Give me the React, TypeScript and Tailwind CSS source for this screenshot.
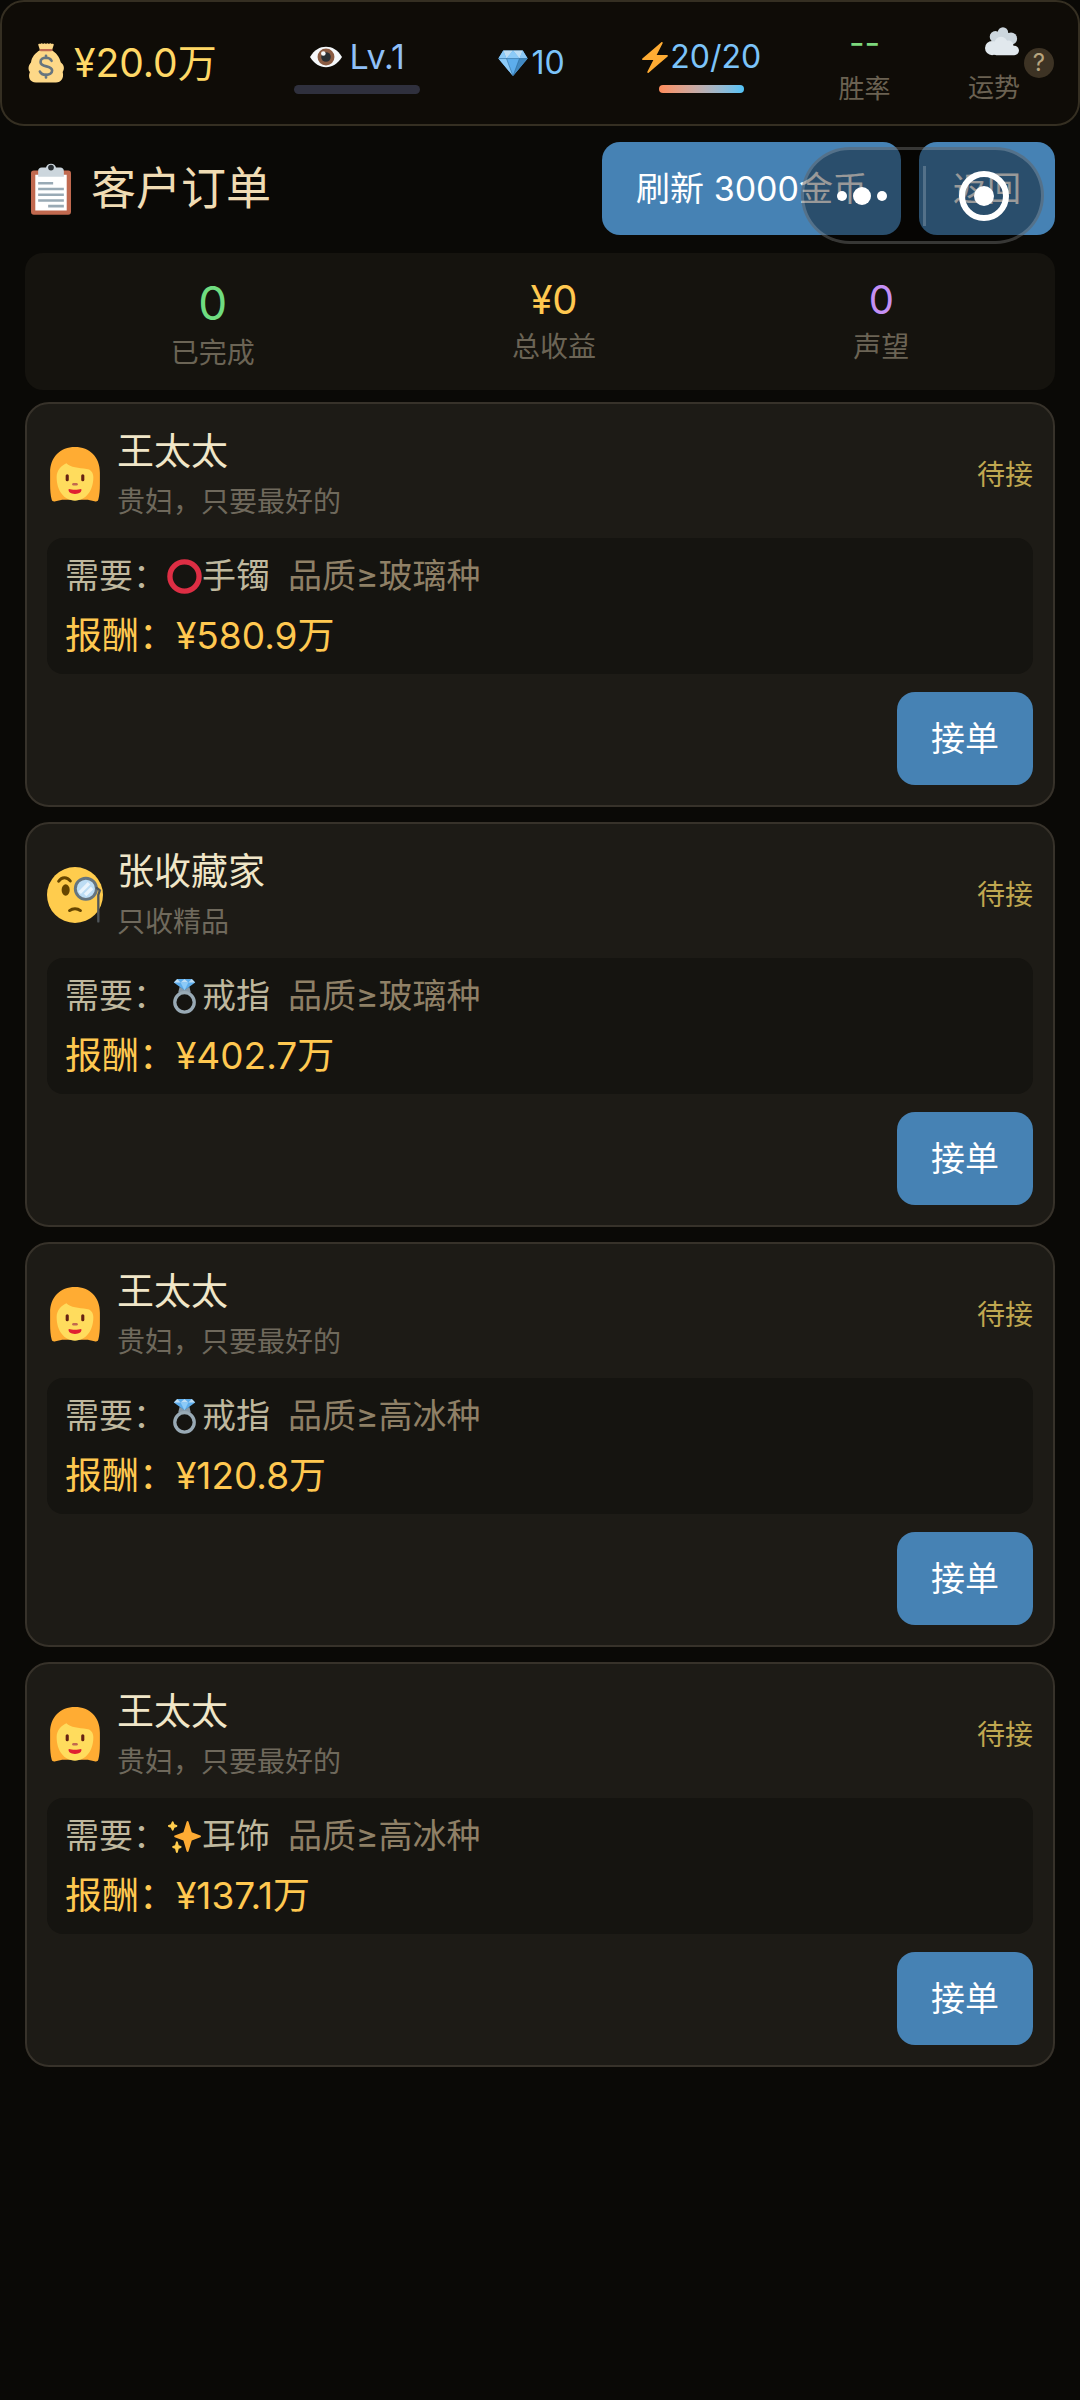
import type { ReactNode } from "react";

interface IconProps {
  className: string;
}

interface Order {
  id: number;
  customer: string;
  desc: string;
  avatar: "lady" | "collector";
  item: "bracelet" | "ring" | "earring";
  itemName: string;
  quality: string;
  reward: string;
}

const orders: Order[] = [
  { id: 1, customer: "王太太", desc: "贵妇，只要最好的", avatar: "lady", item: "bracelet", itemName: "手镯", quality: "玻璃种", reward: "¥580.9万" },
  { id: 2, customer: "张收藏家", desc: "只收精品", avatar: "collector", item: "ring", itemName: "戒指", quality: "玻璃种", reward: "¥402.7万" },
  { id: 3, customer: "王太太", desc: "贵妇，只要最好的", avatar: "lady", item: "ring", itemName: "戒指", quality: "高冰种", reward: "¥120.8万" },
  { id: 4, customer: "王太太", desc: "贵妇，只要最好的", avatar: "lady", item: "earring", itemName: "耳饰", quality: "高冰种", reward: "¥137.1万" },
];

function MoneyBagIcon({ className }: IconProps) {
  return (
    <svg viewBox="0 0 36 36" className={className} aria-hidden="true">
      <path fill="#FDD888" d="M11 1.500c0-1 1-1.200 1.800-.5.700-.9 1.900-.9 2.600-.1.700-.9 1.900-.9 2.600 0 .700-.9 1.900-.9 2.600 0 .700-.8 1.900-.8 2.600.1.800-.7 1.800-.5 1.800.5L23.400 6.500c6 4 7 8 8 11 3 2 3.500 6 1.600 8.500 1.500 5.500-1.500 9.500-6 9.500H9c-5.500 0-7.500-5-5.500-9.500-2.500-3-.5-7 1-8.500.5-4.500 3.500-8.500 8.100-11z" />
      <rect x="12.200" y="5.400" width="11.600" height="2" rx="1" fill="#BF6952" />
      <path fill="none" stroke="#67757F" strokeWidth="2.400" strokeLinecap="round" d="M18 11.500v2M18 28.500v2.500M23 16c-1-2-2.700-2.700-5-2.700-2.900 0-4.900 1.500-4.900 3.700 0 5.500 10.400 2.600 10.400 7.800 0 2.500-2.400 3.900-5.500 3.900-2.700 0-4.700-1-5.500-3" />
    </svg>
  );
}

function EyeIcon({ className }: IconProps) {
  return (
    <svg viewBox="0 0 36 24" className={className} aria-hidden="true">
      <path fill="#F5F8FA" d="M0 12C5 4 11 .5 18 .5S31 4 36 12c-5 8-11 11.500-18 11.500S5 20 0 12z" />
      <circle cx="18" cy="12" r="9.500" fill="#8A5B42" />
      <circle cx="18" cy="12" r="5.400" fill="#292F33" />
      <circle cx="15" cy="8" r="2.600" fill="#F5F8FA" />
    </svg>
  );
}

function GemIcon({ className }: IconProps) {
  return (
    <svg viewBox="0 0 36 32" className={className} aria-hidden="true">
      <path fill="#5DADEC" d="M0 10.500 6 .5h24l6 10L18 32z" />
      <path fill="#BDDDF4" d="M6 .5 10 10.500 18 .5zM30 .5l-4 10L18 .5z" />
      <path fill="#8CCAF7" d="M6 .5 0 10.500h10zM30 .5l6 10H26zM18 .5l-8 10h16z" />
      <path fill="#8CCAF7" d="M0 10.500h10L18 32z" />
      <path fill="#4289C1" d="M36 10.500H26L18 32z" />
      <path fill="none" stroke="#2A6797" strokeWidth=".7" d="M0 10.500h36M10 10.500 18 32l8-21.500" />
    </svg>
  );
}

function BoltIcon({ className }: IconProps) {
  return (
    <svg viewBox="3 0 30 36" className={className} aria-hidden="true">
      <path fill="#FFAC33" d="M32.938 15.651C32.792 15.260 32.418 15 32 15H19.925L26.890 1.458c.219-.426.106-.947-.271-1.243C26.437.071 26.218 0 26 0c-.233 0-.466.082-.653.243L18 6.588 3.347 19.243c-.316.273-.43.714-.284 1.105S3.582 21 4 21h12.075L9.110 34.542c-.219.426-.106.947.271 1.243.182.144.401.215.619.215.233 0 .466-.082.653-.243L18 29.412l14.653-12.655c.317-.273.43-.714.285-1.106z" />
    </svg>
  );
}

function CloudIcon({ className }: IconProps) {
  return (
    <svg viewBox="0 0 36 30" className={className} aria-hidden="true">
      <g fill="#CCD6DD">
        <circle cx="19" cy="5.500" r="5.500" />
        <circle cx="11" cy="10" r="6" />
        <circle cx="27.500" cy="12" r="6.500" />
        <rect x="9" y="6" width="20" height="14" />
      </g>
      <g fill="#E1E8ED">
        <circle cx="7.500" cy="22" r="7.500" />
        <circle cx="17" cy="17" r="7" />
        <circle cx="25" cy="19" r="5" />
        <rect x="7" y="19.500" width="29" height="10" rx="5" />
      </g>
    </svg>
  );
}

function ClipboardIcon({ className }: IconProps) {
  return (
    <svg viewBox="0 0 28 36" className={className} aria-hidden="true">
      <rect y="5" width="28" height="31" rx="2" fill="#C1694F" />
      <path fill="#FFF" d="M3 8h22v25H3z" />
      <path fill="#CCD6DD" d="M5 9.500V5.500C5 4 6 3 7.500 3h3a3.600 3.600 0 0 1 7 0h3C22 3 23 4 23 5.500v4z" />
      <circle cx="14" cy="3" r="2" fill="#292F33" />
      <path stroke="#99AAB5" strokeWidth="1.800" d="M5 14h10.500M5 18h18M5 22h18M5 26h18M12 30h11" />
    </svg>
  );
}

function LadyIcon({ className }: IconProps) {
  return (
    <svg viewBox="0 0 36 36" className={className} aria-hidden="true">
      <path fill="#FFAC33" d="M18 0C8.500 0 2 6.500 2 16.500V24c0 4 .3 7 1 9.800.3 1.200 1.300 1.500 2.500 1.100 2.500-.8 4.500-1.200 6.500-1h12c2-.2 4 .2 6.500 1 1.200.4 2.200.1 2.500-1.100.7-2.800 1-5.800 1-9.800v-7.500C34 6.500 27.500 0 18 0z" />
      <path fill="#FFDC5D" d="M12.500 10.500c2.500 2.800 8 3 13 3.600 2.800.3 4.300 2.400 4.300 5.400 0 8.500-4.800 15-11.800 15S6.200 28 6.200 19.500c0-4.500 3-7.500 6.300-9z" />
      <rect x="12" y="17.500" width="2" height="4.500" rx="1" fill="#662113" />
      <rect x="22" y="17.500" width="2" height="4.500" rx="1" fill="#662113" />
      <path stroke="#C1694F" strokeWidth="1.600" strokeLinecap="round" d="M17 24h2" />
      <path fill="#DF1F32" d="M14 27c2 .7 6 .7 8 0 .7 1.600-1.200 3.200-4 3.200S13.300 28.600 14 27z" />
    </svg>
  );
}

function CollectorIcon({ className }: IconProps) {
  return (
    <svg viewBox="0 0 36 36" className={className} aria-hidden="true">
      <circle cx="18" cy="18" r="18" fill="#FFCC4D" />
      <path fill="none" stroke="#664500" strokeWidth="1.900" strokeLinecap="round" d="M7.500 9.200c2-3.200 5.500-3 7.500-.2M14.500 28c2-1.600 5-1.600 7 0" />
      <ellipse cx="12" cy="14.800" rx="2.600" ry="3.700" fill="#664500" />
      <circle cx="25" cy="14" r="6.800" fill="#BDDDF4" stroke="#66757F" strokeWidth="1.900" />
      <path stroke="#E9F4FC" strokeWidth="2.200" d="m21 16.500 6-6M24.500 18l4.500-4.500" />
      <path fill="none" stroke="#50565A" strokeWidth="1.500" strokeLinecap="round" d="m32 13.500 2 1.500-1 3v17" />
    </svg>
  );
}

function ItemIcon({ item, className }: IconProps & { item: Order["item"] }) {
  if (item === "bracelet") {
    return (
      <svg viewBox="0 0 36 36" className={className} aria-hidden="true">
        <circle cx="18" cy="18" r="15" fill="none" stroke="#DD2E44" strokeWidth="5.500" />
      </svg>
    );
  }
  if (item === "ring") {
    return (
      <svg viewBox="0 0 36 36" className={className} aria-hidden="true">
        <path fill="#8899A6" d="m13 8 5 3 5-3 1.500 6h-13z" />
        <circle cx="18" cy="24" r="10" fill="none" stroke="#99AAB5" strokeWidth="3.400" />
        <path fill="#5DADEC" d="M7 3.500 10.500 0h15L29 3.500 18 11.500z" />
        <path fill="#BDDDF4" d="m7 3.500 3.500-3.500L14 3.500zM18 0l4 3.500h-8zM25.500 0 29 3.500h-7z" />
        <path fill="#8CCAF7" d="M14 3.500h8l-4 8z" />
      </svg>
    );
  }
  return (
    <svg viewBox="0 0 36 36" className={className} aria-hidden="true">
      <path fill="#FFAC33" d="M34.347 16.893l-8.899-3.294-3.323-10.891c-.128-.42-.517-.708-.956-.708-.439 0-.828.288-.956.708l-3.322 10.891-8.900 3.294c-.393.146-.653.519-.653.938 0 .418.260.793.653.938l8.895 3.293 3.324 11.223c.126.424.516.715.959.715.442 0 .833-.291.959-.716l3.324-11.223 8.896-3.293c.391-.144.652-.518.652-.937 0-.418-.261-.792-.653-.938z" />
      <path fill="#FFCC4D" d="M14.347 27.894l-2.314-.856-.9-3.300c-.118-.436-.513-.738-.964-.738-.451 0-.846.302-.965.737l-.9 3.300-2.313.856c-.393.146-.653.520-.653.938 0 .418.260.792.653.938l2.301.853.907 3.622c.112.444.511.756.970.756.459 0 .858-.312.970-.757l.907-3.622 2.301-.853c.393-.144.653-.519.653-.937 0-.418-.260-.793-.653-.937zM10.009 6.231l-2.364-.875-.876-2.365c-.145-.393-.519-.653-.938-.653-.418 0-.792.260-.938.653l-.875 2.365-2.365.875c-.393.146-.653.520-.653.938 0 .418.260.793.653.938l2.365.875.875 2.365c.146.393.520.653.938.653.418 0 .792-.260.938-.653l.875-2.365 2.365-.875c.393-.146.653-.520.653-.938 0-.418-.260-.792-.653-.938z" />
    </svg>
  );
}

function BlueButton({ children }: { children: ReactNode }) {
  return (
    <button type="button" className="h-[93px] shrink-0 rounded-[18px] bg-[#4682b4] px-[34px] text-[34px] leading-[48px] whitespace-nowrap text-white">
      {children}
    </button>
  );
}

// 顶部资源栏
function StatusBar() {
  return (
    <header className="flex h-[126px] items-center justify-between rounded-3xl border-2 border-[#352f22] bg-[#0f0c07] px-6">
      <div className="flex items-center gap-2 text-[39px] leading-[48px] text-[#ffd866]">
        <MoneyBagIcon className="h-10 w-10" />
        ¥20.0万
      </div>
      <div className="flex w-[126px] flex-col items-center gap-1">
        <div className="flex items-center gap-2 text-[34px] leading-[48px] text-[#90c0f8]">
          <EyeIcon className="h-[22px] w-8" />
          Lv.1
        </div>
        <div className="h-[9px] w-full rounded-full bg-[#2f303d]" />
      </div>
      <div className="flex items-center gap-1 text-[32px] leading-[48px] text-[#7cc4fa]">
        <GemIcon className="h-[26px] w-[30px]" />
        10
      </div>
      <div className="flex flex-col items-center gap-1">
        <div className="flex items-center gap-[2px] text-[32px] leading-[48px] text-[#7cc4fa]">
          <BoltIcon className="h-[31px] w-[26px]" />
          20/20
        </div>
        <div className="h-2 w-[85px] rounded-full bg-linear-to-r from-[#ff8c5a] to-[#4fc3f7]" />
      </div>
      <div className="flex flex-col items-center pt-2 text-[26px] leading-[48px] text-[#6b6252]">
        <span className="text-[34px] leading-[44px] text-[#7dd87d]">--</span>
        胜率
      </div>
      <div className="flex items-center gap-1">
        <div className="flex flex-col items-center gap-3 pt-2 text-[26px] leading-[40px] text-[#6b6252]">
          <CloudIcon className="ml-4 h-[29px] w-[34px]" />
          运势
        </div>
        <button type="button" aria-label="运势说明" className="h-[30px] w-[30px] rounded-full bg-[#3d3324] text-[24px] leading-[30px] text-[#b8a57e]">
          ?
        </button>
      </div>
    </header>
  );
}

// 小程序右上角胶囊
function Capsule() {
  return (
    <div className="absolute top-[147px] right-9 flex h-[97px] w-[243px] items-center rounded-full border-[3px] border-white/20 bg-black/40">
      <button type="button" aria-label="更多" className="flex flex-1 items-center justify-center gap-[6px] pr-1">
        <span className="h-[10px] w-[10px] rounded-full bg-white" />
        <span className="h-[18px] w-[18px] rounded-full bg-white" />
        <span className="h-[10px] w-[10px] rounded-full bg-white" />
      </button>
      <span className="h-[60px] w-[3px] bg-white/20" />
      <button type="button" aria-label="关闭" className="flex flex-1 items-center justify-center">
        <span className="flex h-[50px] w-[50px] items-center justify-center rounded-full border-[6px] border-white">
          <span className="h-5 w-5 rounded-full bg-white" />
        </span>
      </button>
    </div>
  );
}

function OrderCard({ order }: { order: Order }) {
  return (
    <article className="rounded-3xl border-2 border-[#37322a] bg-[#1d1b16] p-5">
      <div className="flex items-center gap-[14px]">
        {order.avatar === "lady" ? (
          <LadyIcon className="h-14 w-14" />
        ) : (
          <CollectorIcon className="h-14 w-14" />
        )}
        <div className="flex-1 pt-[2px]">
          <h2 className="text-[37px] leading-[52px] text-[#f0e6c8]">{order.customer}</h2>
          <p className="text-[28px] leading-[48px] text-[#6f695c]">{order.desc}</p>
        </div>
        <span className="text-[28px] leading-[40px] text-[#c0a850]">待接</span>
      </div>
      <div className="mt-3 rounded-2xl bg-[#151410] px-[18px] py-2">
        <p className="flex items-center text-[34px] leading-[60px] text-[#bfb89e]">
          需要：
          <ItemIcon item={order.item} className="h-[35px] w-[35px]" />
          {order.itemName}
          <span className="ml-[18px] text-[#8f8066]">品质≥{order.quality}</span>
        </p>
        <p className="text-[37px] leading-[60px] text-[#ffc850]">报酬：{order.reward}</p>
      </div>
      <div className="mt-[18px] flex justify-end">
        <BlueButton>接单</BlueButton>
      </div>
    </article>
  );
}

export default function App() {
  return (
    <div className="relative min-h-screen bg-[#0a0906] font-['Inter','Noto_Sans_CJK_SC',sans-serif]">
      <StatusBar />
      <main className="px-[25px] pt-4">
        <div className="flex items-center justify-between">
          <h1 className="flex items-center gap-5 pl-[6px] text-[45px] leading-[64px] text-[#f0dcb4]">
            <ClipboardIcon className="h-[52px] w-10" />
            客户订单
          </h1>
          <div className="flex gap-[18px]">
            <BlueButton>刷新 3000金币</BlueButton>
            <BlueButton>返回</BlueButton>
          </div>
        </div>
        <section className="mt-[18px] flex h-[137px] items-start justify-around rounded-[18px] bg-[#15130e] px-[17px] pt-5 text-center text-[28px] leading-[40px] text-[#6b6455]">
          <div>
            <div className="text-[46px] leading-[60px] text-[#6fdc80]">0</div>
            已完成
          </div>
          <div>
            <div className="text-[40px] leading-[54px] text-[#ffc850]">¥0</div>
            总收益
          </div>
          <div>
            <div className="text-[40px] leading-[54px] text-[#c490f5]">0</div>
            声望
          </div>
        </section>
        <div className="mt-3 flex flex-col gap-[15px]">
          {orders.map((order) => (
            <OrderCard key={order.id} order={order} />
          ))}
        </div>
      </main>
      <Capsule />
    </div>
  );
}
